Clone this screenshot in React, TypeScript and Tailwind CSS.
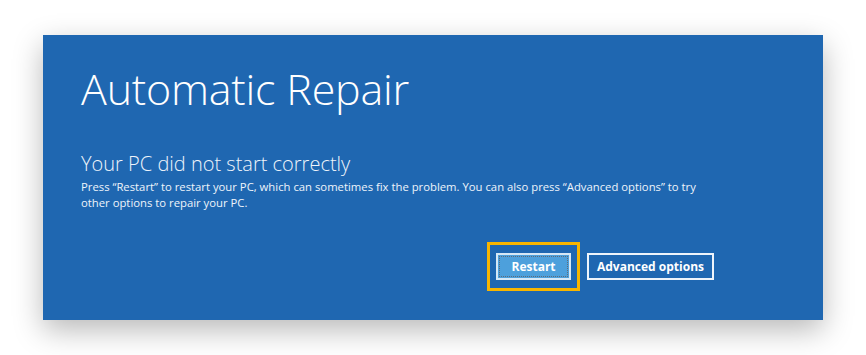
export default function App() {
  return (
    <div className="w-full h-[355px] bg-white pt-[35px] pl-[43px]" style={{ fontFamily: '"Open Sans", "Noto Sans", sans-serif' }}>
      {/* Blue recovery screen */}
      <div className="w-[780px] h-[285px] bg-[#1f67b1] text-white pl-[38px] pt-[26px] flex flex-col shadow-[0_10px_28px_rgba(0,0,0,0.28)]">
        <h1 className="text-[43px] font-light leading-[56px] tracking-[-0.2px]">Automatic Repair</h1>

        <h2 className="mt-[34px] text-[20px] font-light leading-[25px] text-[#eef4fb]">Your PC did not start correctly</h2>
        <p className="mt-[3px] text-[11.3px] leading-[16px] text-[#eef4fb] w-[640px]">
          Press “Restart” to restart your PC, which can sometimes fix the problem. You can also press “Advanced options” to try
          other options to repair your PC.
        </p>

        {/* Buttons */}
        <div className="mt-[31px] flex items-center justify-end pr-[109px] gap-[7px]">
          <div className="w-[93px] h-[49px] border-[3px] border-[#f7b500] flex items-center justify-center">
            <button className="w-[75px] h-[27px] border-2 border-[#d6e8f6] bg-[#4da0dc] p-[1px]">
              <span className="w-full h-full flex items-center justify-center border border-dotted border-[#5f6b78] text-[12px] font-bold text-white">
                Restart
              </span>
            </button>
          </div>
          <button className="w-[127px] h-[27px] border-2 border-[#eef4fb] text-[12px] font-bold text-white flex items-center justify-center">
            Advanced options
          </button>
        </div>
      </div>
    </div>
  )
}
